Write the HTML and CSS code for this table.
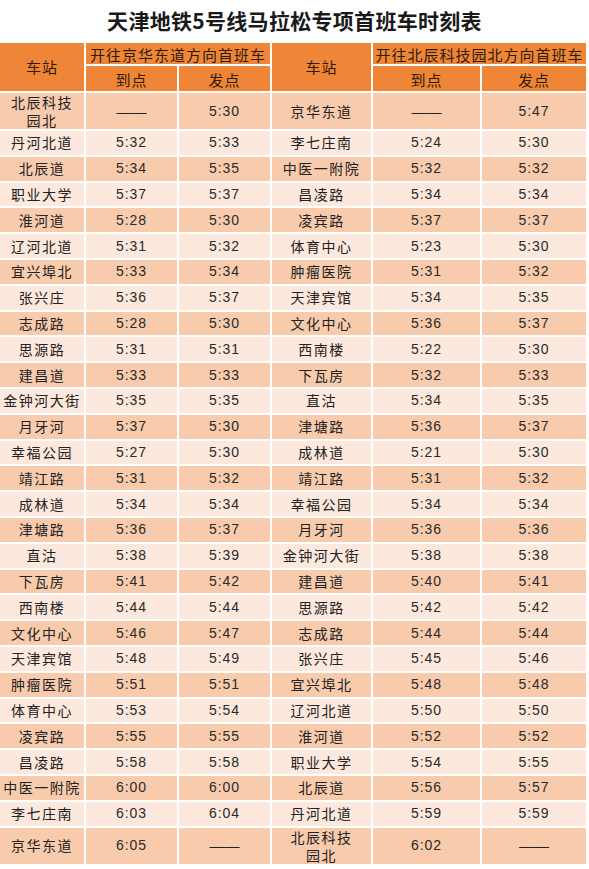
FILE: index.html
```html
<!DOCTYPE html>
<html lang="zh-CN">
<head>
<meta charset="utf-8">
<title>天津地铁5号线马拉松专项首班车时刻表</title>
<link rel="stylesheet" href="styles.css">
</head>
<body>
<h1 class="title">天津地铁5号线马拉松专项首班车时刻表</h1>
<table class="timetable">
<colgroup>
<col class="c1"><col class="c2"><col class="c3"><col class="c4"><col class="c5"><col class="c6">
</colgroup>
<thead>
<tr class="h1">
<th rowspan="2">车站</th>
<th colspan="2" class="dir">开往京华东道方向首班车</th>
<th rowspan="2">车站</th>
<th colspan="2" class="dir">开往北辰科技园北方向首班车</th>
</tr>
<tr class="h2">
<th>到点</th><th>发点</th><th>到点</th><th>发点</th>
</tr>
</thead>
<tbody>
<tr class="dark tall"><td class="st two">北辰科技<br>园北</td><td class="dash">——</td><td class="tm">5:30</td><td class="st">京华东道</td><td class="dash">——</td><td class="tm">5:47</td></tr>
<tr class="light"><td class="st">丹河北道</td><td class="tm">5:32</td><td class="tm">5:33</td><td class="st">李七庄南</td><td class="tm">5:24</td><td class="tm">5:30</td></tr>
<tr class="dark"><td class="st">北辰道</td><td class="tm">5:34</td><td class="tm">5:35</td><td class="st">中医一附院</td><td class="tm">5:32</td><td class="tm">5:32</td></tr>
<tr class="light"><td class="st">职业大学</td><td class="tm">5:37</td><td class="tm">5:37</td><td class="st">昌凌路</td><td class="tm">5:34</td><td class="tm">5:34</td></tr>
<tr class="dark"><td class="st">淮河道</td><td class="tm">5:28</td><td class="tm">5:30</td><td class="st">凌宾路</td><td class="tm">5:37</td><td class="tm">5:37</td></tr>
<tr class="light"><td class="st">辽河北道</td><td class="tm">5:31</td><td class="tm">5:32</td><td class="st">体育中心</td><td class="tm">5:23</td><td class="tm">5:30</td></tr>
<tr class="dark"><td class="st">宜兴埠北</td><td class="tm">5:33</td><td class="tm">5:34</td><td class="st">肿瘤医院</td><td class="tm">5:31</td><td class="tm">5:32</td></tr>
<tr class="light"><td class="st">张兴庄</td><td class="tm">5:36</td><td class="tm">5:37</td><td class="st">天津宾馆</td><td class="tm">5:34</td><td class="tm">5:35</td></tr>
<tr class="dark"><td class="st">志成路</td><td class="tm">5:28</td><td class="tm">5:30</td><td class="st">文化中心</td><td class="tm">5:36</td><td class="tm">5:37</td></tr>
<tr class="light"><td class="st">思源路</td><td class="tm">5:31</td><td class="tm">5:31</td><td class="st">西南楼</td><td class="tm">5:22</td><td class="tm">5:30</td></tr>
<tr class="dark"><td class="st">建昌道</td><td class="tm">5:33</td><td class="tm">5:33</td><td class="st">下瓦房</td><td class="tm">5:32</td><td class="tm">5:33</td></tr>
<tr class="light"><td class="st">金钟河大街</td><td class="tm">5:35</td><td class="tm">5:35</td><td class="st">直沽</td><td class="tm">5:34</td><td class="tm">5:35</td></tr>
<tr class="dark"><td class="st">月牙河</td><td class="tm">5:37</td><td class="tm">5:30</td><td class="st">津塘路</td><td class="tm">5:36</td><td class="tm">5:37</td></tr>
<tr class="light"><td class="st">幸福公园</td><td class="tm">5:27</td><td class="tm">5:30</td><td class="st">成林道</td><td class="tm">5:21</td><td class="tm">5:30</td></tr>
<tr class="dark"><td class="st">靖江路</td><td class="tm">5:31</td><td class="tm">5:32</td><td class="st">靖江路</td><td class="tm">5:31</td><td class="tm">5:32</td></tr>
<tr class="light"><td class="st">成林道</td><td class="tm">5:34</td><td class="tm">5:34</td><td class="st">幸福公园</td><td class="tm">5:34</td><td class="tm">5:34</td></tr>
<tr class="dark"><td class="st">津塘路</td><td class="tm">5:36</td><td class="tm">5:37</td><td class="st">月牙河</td><td class="tm">5:36</td><td class="tm">5:36</td></tr>
<tr class="light"><td class="st">直沽</td><td class="tm">5:38</td><td class="tm">5:39</td><td class="st">金钟河大街</td><td class="tm">5:38</td><td class="tm">5:38</td></tr>
<tr class="dark"><td class="st">下瓦房</td><td class="tm">5:41</td><td class="tm">5:42</td><td class="st">建昌道</td><td class="tm">5:40</td><td class="tm">5:41</td></tr>
<tr class="light"><td class="st">西南楼</td><td class="tm">5:44</td><td class="tm">5:44</td><td class="st">思源路</td><td class="tm">5:42</td><td class="tm">5:42</td></tr>
<tr class="dark"><td class="st">文化中心</td><td class="tm">5:46</td><td class="tm">5:47</td><td class="st">志成路</td><td class="tm">5:44</td><td class="tm">5:44</td></tr>
<tr class="light"><td class="st">天津宾馆</td><td class="tm">5:48</td><td class="tm">5:49</td><td class="st">张兴庄</td><td class="tm">5:45</td><td class="tm">5:46</td></tr>
<tr class="dark"><td class="st">肿瘤医院</td><td class="tm">5:51</td><td class="tm">5:51</td><td class="st">宜兴埠北</td><td class="tm">5:48</td><td class="tm">5:48</td></tr>
<tr class="light"><td class="st">体育中心</td><td class="tm">5:53</td><td class="tm">5:54</td><td class="st">辽河北道</td><td class="tm">5:50</td><td class="tm">5:50</td></tr>
<tr class="dark"><td class="st">凌宾路</td><td class="tm">5:55</td><td class="tm">5:55</td><td class="st">淮河道</td><td class="tm">5:52</td><td class="tm">5:52</td></tr>
<tr class="light"><td class="st">昌凌路</td><td class="tm">5:58</td><td class="tm">5:58</td><td class="st">职业大学</td><td class="tm">5:54</td><td class="tm">5:55</td></tr>
<tr class="dark"><td class="st">中医一附院</td><td class="tm">6:00</td><td class="tm">6:00</td><td class="st">北辰道</td><td class="tm">5:56</td><td class="tm">5:57</td></tr>
<tr class="light"><td class="st">李七庄南</td><td class="tm">6:03</td><td class="tm">6:04</td><td class="st">丹河北道</td><td class="tm">5:59</td><td class="tm">5:59</td></tr>
<tr class="dark tall last"><td class="st">京华东道</td><td class="tm">6:05</td><td class="dash">——</td><td class="st two">北辰科技<br>园北</td><td class="tm">6:02</td><td class="dash">——</td></tr>
</tbody>
</table>
</body>
</html>
```
FILE: styles.css
```css
html, body {
  margin: 0;
  padding: 0;
  background: #ffffff;
}

body {
  width: 589px;
  height: 869px;
  overflow: hidden;
  font-family: "Noto Sans CJK SC", "Noto Sans", sans-serif;
  color: #222222;
}

.title {
  margin: 0;
  height: 41px;
  line-height: 40px;
  text-align: center;
  font-size: 21px;
  font-weight: 700;
  color: #1a1a1a;
  letter-spacing: 0.3px;
}

.timetable {
  border-collapse: separate;
  border-spacing: 2px;
  margin-left: -2px;
  table-layout: fixed;
  width: 590px;
}

.c1 { width: 84px; }
.c2 { width: 91px; }
.c3 { width: 91px; }
.c4 { width: 99px; }
.c5 { width: 107px; }
.c6 { width: 104px; }

.timetable th,
.timetable td {
  padding: 0;
  text-align: center;
  vertical-align: middle;
  white-space: nowrap;
  overflow: hidden;
}

.timetable th {
  background: #ef8537;
  color: #2e1c0c;
  font-weight: 400;
  font-size: 15px;
  letter-spacing: 1px;
  line-height: 18px;
}

.h1 th { height: 21px; }
.h2 th { height: 25px; }

.h1 .dir {
  vertical-align: bottom;
  line-height: 18px;
}

.h2 th {
  vertical-align: bottom;
  line-height: 22px;
}

.timetable td {
  height: 23.8px;
  font-size: 14px;
  line-height: 17px;
}

.timetable td.two {
  line-height: 18px;
}

.tall td { height: 36px; }
.last td { height: 36.5px; }

.dark td { background: #f8cbad; }
.light td { background: #fce8dc; }

.st {
  letter-spacing: 1.5px;
}

.tm {
  font-family: "Liberation Sans", "DejaVu Sans", sans-serif;
  font-size: 15px;
  letter-spacing: 1px;
  color: #2a2a2a;
}

.timetable td.dash {
  font-family: "Liberation Sans", "DejaVu Sans", sans-serif;
  font-size: 15px;
  letter-spacing: 0;
  color: #222222;
}
```
